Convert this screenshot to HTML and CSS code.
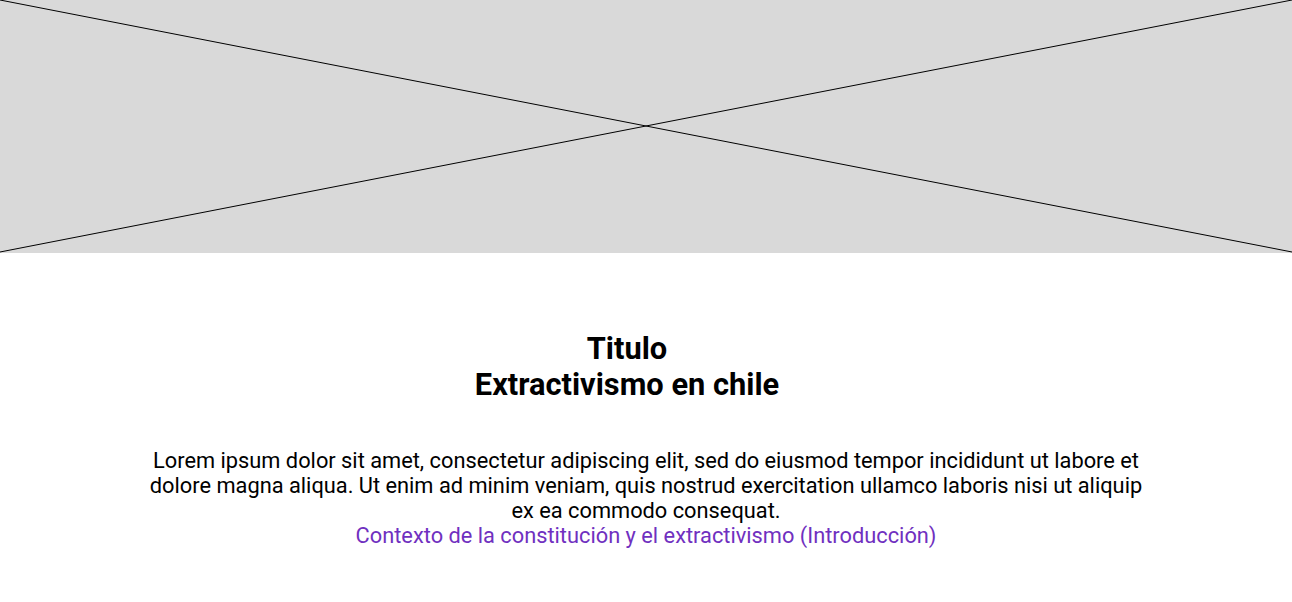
FILE: index.html
```html
<!DOCTYPE html>
<html lang="es">
<head>
<meta charset="utf-8">
<title>Extractivismo en chile</title>
<link rel="stylesheet" href="styles.css">
</head>
<body>
<div class="hero">
  <svg class="hero-x" viewBox="0 0 1292 253" preserveAspectRatio="none">
    <line x1="0" y1="0" x2="1292" y2="252" />
    <line x1="0" y1="252" x2="1292" y2="0" />
  </svg>
</div>
<main class="content">
  <h1 class="title">Titulo<br>Extractivismo en chile</h1>
  <p class="text">Lorem ipsum dolor sit amet, consectetur adipiscing elit, sed do eiusmod tempor incididunt ut labore et dolore magna aliqua. Ut enim ad minim veniam, quis nostrud exercitation ullamco laboris nisi ut aliquip ex ea commodo consequat.<br><a class="link" href="#">Contexto de la constitución y el extractivismo (Introducción)</a></p>
</main>
</body>
</html>
```
FILE: styles.css
```css
html, body {
  margin: 0;
  padding: 0;
  background: #ffffff;
  font-family: Roboto, "Liberation Sans", sans-serif;
  color: #000000;
}
.hero {
  height: 253px;
  background: #d9d9d9;
}
.hero-x {
  display: block;
  width: 100%;
  height: 100%;
}
.hero-x line {
  stroke: #000000;
  stroke-width: 1;
  vector-effect: non-scaling-stroke;
}
.content {
  display: flex;
  flex-direction: column;
  align-items: center;
  padding-top: 78px;
}
.title {
  margin: 0;
  padding-right: 38px;
  font-size: 30.8px;
  line-height: 36px;
  font-weight: 700;
  text-align: center;
}
.text {
  margin: 45px 0 0;
  width: 1000px;
  font-size: 21.8px;
  line-height: 25px;
  text-align: center;
}
.link {
  color: #7030c0;
  text-decoration: none;
}
```
